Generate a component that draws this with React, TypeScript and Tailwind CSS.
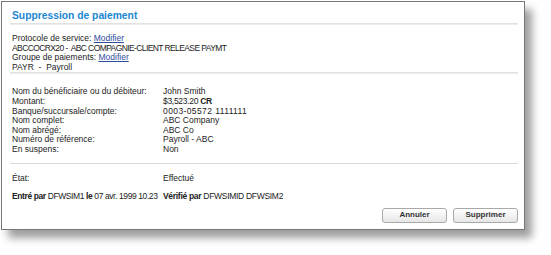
const rows: [string, React.ReactNode][] = [
  ["Nom du bénéficiaire ou du débiteur:", "John Smith"],
  [
    "Montant:",
    <span className="tracking-[-0.3px]">
      $3,523.20 <span className="font-bold">CR</span>
    </span>,
  ],
  ["Banque/succursale/compte:", <span className="tracking-[0.4px]">0003-05572 1111111</span>],
  ["Nom complet:", "ABC Company"],
  ["Nom abrégé:", "ABC Co"],
  ["Numéro de référence:", "Payroll - ABC"],
  ["En suspens:", "Non"],
];

function Separator({ className = "" }: { className?: string }) {
  return <div className={`h-[2px] bg-gradient-to-b from-[#dcdcdc] to-[#f2f2f2] ${className}`} />;
}

function Button({ children }: { children: React.ReactNode }) {
  return (
    <button className="h-[15px] w-[65px] rounded-[3px] border border-[#a9a9a9] bg-gradient-to-b from-white to-[#e6e6e6] text-[8px] font-bold leading-none text-[#333]">
      {children}
    </button>
  );
}

export default function App() {
  return (
    <div className="h-[255px] w-[551px] bg-white pl-px pt-px font-['Liberation_Sans',Arial,sans-serif]">
      <div className="flex h-[229px] w-[524px] flex-col border border-[#777] bg-white pl-[8px] pr-[6px] shadow-[7px_8px_8px_rgba(0,0,0,0.38)]">
        <div className="mt-[7px] pl-[2px] text-[10.3px] font-bold leading-[13px] text-[#1b87d2]">
          Suppression de paiement
        </div>
        <Separator className="mt-[1px]" />

        <div className="mt-[9px] pl-[2px] text-[8.5px] leading-[9.6px] text-[#222]">
          <div>
            Protocole de service: <a className="text-[#2b4c9b] underline">Modifier</a>
          </div>
          <div className="tracking-[-0.6px]">ABCCOCRX20 -&nbsp; ABC COMPAGNIE-CLIENT RELEASE PAYMT</div>
          <div>
            Groupe de paiements: <a className="text-[#2b4c9b] underline">Modifier</a>
          </div>
          <div>PAYR&nbsp; -&nbsp; Payroll</div>
        </div>
        <Separator className="mt-0" />

        <div className="mt-[13px] pl-[2px] text-[8.5px] leading-[9.6px] text-[#222]">
          {rows.map(([label, value]) => (
            <div key={label} className="flex">
              <div className="w-[151px] shrink-0">{label}</div>
              <div>{value}</div>
            </div>
          ))}
        </div>
        <div className="mt-[8.5px] h-px bg-[#d8d8d8]" />

        <div className="mt-[9.5px] flex pl-[2px] text-[8.5px] leading-[9.6px] text-[#222]">
          <div className="w-[151px] shrink-0">État:</div>
          <div>Effectué</div>
        </div>

        <div className="mt-[9px] flex pl-[2px] text-[8.5px] leading-[9.6px] text-[#222]">
          <div className="w-[151px] shrink-0 tracking-[-0.4px]">
            <span className="font-bold">Entré par</span> DFWSIM1 <span className="font-bold">le</span> 07 avr. 1999 10.23
          </div>
          <div className="tracking-[-0.3px]">
            <span className="font-bold">Vérifié par</span> DFWSIMID DFWSIM2
          </div>
        </div>

        <div className="mt-[6px] flex justify-end gap-[6px]">
          <Button>Annuler</Button>
          <Button>Supprimer</Button>
        </div>
      </div>
    </div>
  );
}
